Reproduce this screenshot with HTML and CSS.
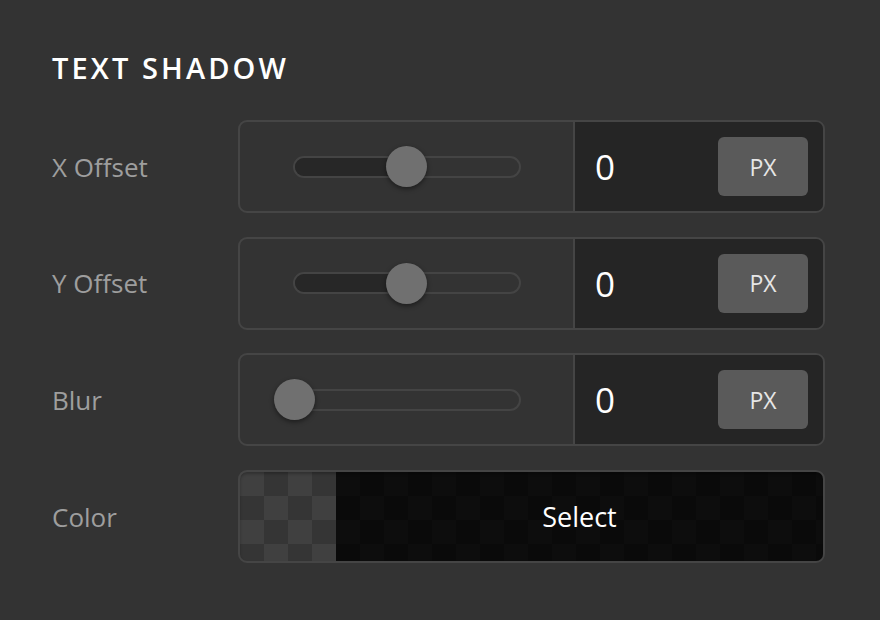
FILE: index.html
```html
<!DOCTYPE html>
<html>
<head>
  <title>Text Shadow</title>
  <link rel="stylesheet" href="styles.css">
</head>
<body>

  <!-- Text shadow settings panel -->
  <div class="panel">
    <h2 class="panel-title">TEXT SHADOW</h2>

    <div class="rows">
      <div class="row">
        <label class="row-label">X Offset</label>
        <div class="control">
          <div class="slider-area">
            <div class="track">
              <div class="track-fill" style="width: 50%"></div>
              <div class="thumb" style="left: 50%"></div>
            </div>
          </div>
          <div class="value-area">
            <span class="value">0</span>
            <button class="unit-btn">PX</button>
          </div>
        </div>
      </div>

      <div class="row">
        <label class="row-label">Y Offset</label>
        <div class="control">
          <div class="slider-area">
            <div class="track">
              <div class="track-fill" style="width: 50%"></div>
              <div class="thumb" style="left: 50%"></div>
            </div>
          </div>
          <div class="value-area">
            <span class="value">0</span>
            <button class="unit-btn">PX</button>
          </div>
        </div>
      </div>

      <div class="row">
        <label class="row-label">Blur</label>
        <div class="control">
          <div class="slider-area">
            <div class="track">
              <div class="track-fill" style="width: 0%"></div>
              <div class="thumb" style="left: 0%"></div>
            </div>
          </div>
          <div class="value-area">
            <span class="value">0</span>
            <button class="unit-btn">PX</button>
          </div>
        </div>
      </div>

      <div class="row">
        <label class="row-label">Color</label>
        <div class="control color-control">
          <div class="swatch"></div>
          <div class="color-select">Select</div>
        </div>
      </div>
    </div>
  </div>

</body>
</html>
```

FILE: styles.css
```css
body {
  margin: 0;
  font-family: "Open Sans", "Noto Sans", sans-serif;
  background-color: #333333;
  color: white;
}
.panel {
  padding: 48px 55px 0 52px;
}
.panel-title {
  margin: 0 0 32px 0;
  font-size: 29px;
  line-height: 40px;
  font-weight: 600;
  letter-spacing: 3.1px;
  color: #ffffff;
}
.rows {
  display: flex;
  flex-direction: column;
  gap: 23.7px;
}
.row {
  display: grid;
  grid-template-columns: 186px 1fr;
  align-items: center;
}
.row-label {
  font-size: 26px;
  color: #9e9e9e;
}
.control {
  display: flex;
  height: 89px;
  border: 2px solid #454545;
  border-radius: 9px;
  overflow: hidden;
}
/* Slider part */
.slider-area {
  width: 333px;
  display: flex;
  align-items: center;
  justify-content: center;
  border-right: 2px solid #454545;
}
.track {
  position: relative;
  width: 228px;
  height: 22px;
  box-sizing: border-box;
  border: 2px solid #444444;
  border-radius: 11px;
}
.track-fill {
  height: 100%;
  background: #272727;
  border-radius: 9px 0 0 9px;
}
.thumb {
  position: absolute;
  top: 50%;
  width: 41px;
  height: 41px;
  margin: -20.5px 0 0 -20.5px;
  border-radius: 50%;
  background: #707070;
  box-shadow: 0 2px 5px rgba(0, 0, 0, 0.45);
}
/* Number + unit part */
.value-area {
  flex: 1;
  display: flex;
  align-items: center;
  justify-content: space-between;
  padding: 0 15px 0 20px;
  background: #252525;
}
.value {
  font-size: 35px;
  color: #ffffff;
}
.unit-btn {
  width: 90px;
  height: 59px;
  border: none;
  border-radius: 6px;
  background: #5a5a5a;
  color: #e6e6e6;
  font-family: inherit;
  font-size: 23px;
  cursor: pointer;
}
/* Color picker */
.color-control {
  background-color: #353535;
  background-image: conic-gradient(#404040 25%, transparent 0 50%, #404040 0 75%, transparent 0);
  background-size: 48px 48px;
  background-position: 24px 0;
  box-shadow: inset 0 2px 3px rgba(0, 0, 0, 0.25);
}
.swatch {
  width: 96px;
}
.color-select {
  flex: 1;
  display: flex;
  align-items: center;
  justify-content: center;
  background: rgba(0, 0, 0, 0.8);
  font-size: 27px;
  color: #ffffff;
}
```
